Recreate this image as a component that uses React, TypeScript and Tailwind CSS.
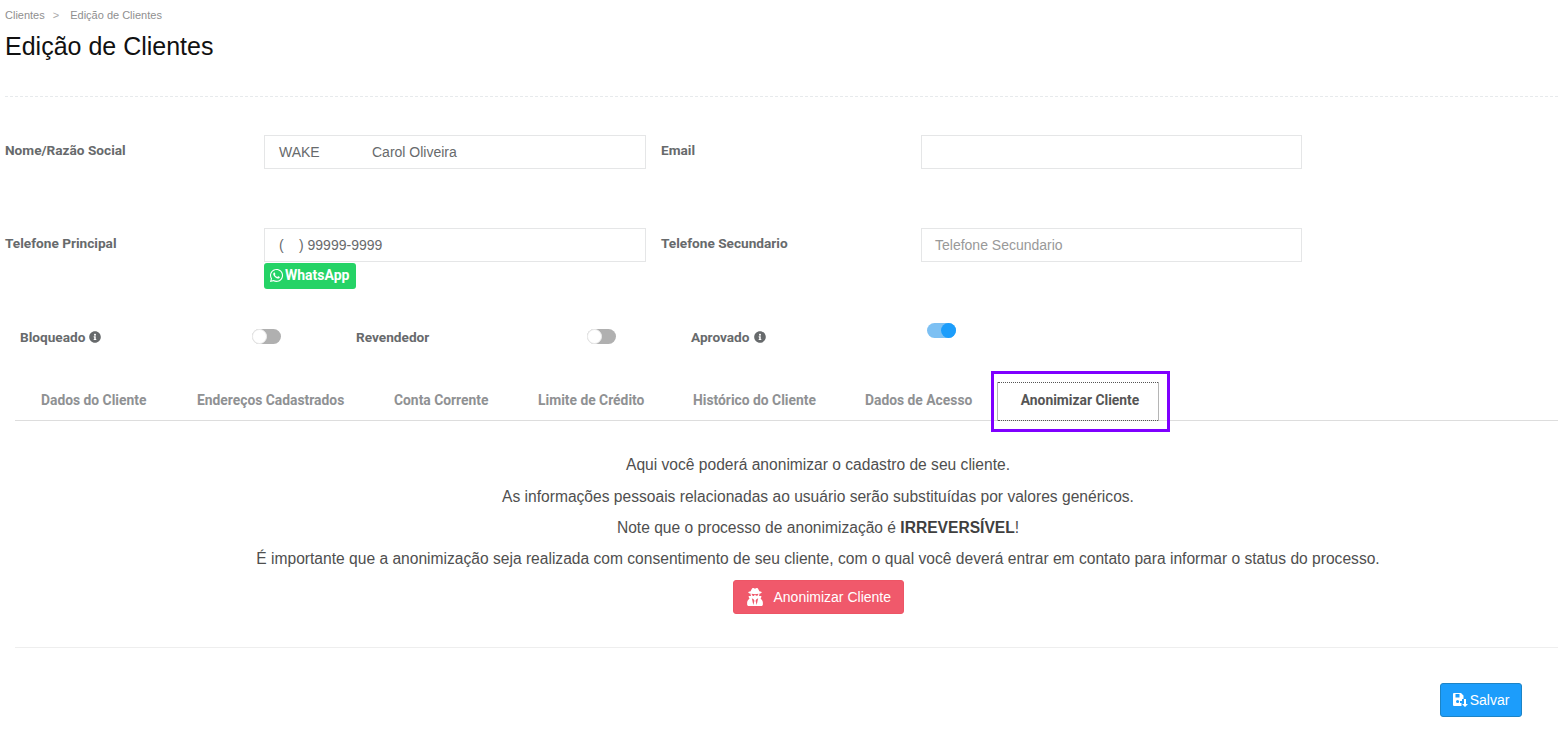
import { FaWhatsapp, FaInfoCircle, FaUserSecret } from "react-icons/fa";

const sans = "font-['Liberation_Sans',Arial,sans-serif]";
const roboto = "font-['Roboto',sans-serif]";

function Label({ children, className = "" }: { children: React.ReactNode; className?: string }) {
  return <div className={`${roboto} text-[13.65px] font-bold leading-[20px] text-[#676a6c] ${className}`}>{children}</div>;
}

function Toggle({ on = false }: { on?: boolean }) {
  return on ? (
    <div className="relative h-[15px] w-[29px] rounded-full bg-[#7cc0f3]">
      <div className="absolute right-0 top-0 h-[15px] w-[15px] rounded-full bg-[#1c9dfb]" />
    </div>
  ) : (
    <div className="relative h-[15px] w-[29px] rounded-full bg-[#b0b0b0]">
      <div className="absolute left-0 top-0 h-[15px] w-[15px] rounded-full border border-[#eeeeee] bg-white" />
    </div>
  );
}

const tabs: [string, string][] = [
  ["Dados do Cliente", "w-[156px]"],
  ["Endereços Cadastrados", "w-[197px]"],
  ["Conta Corrente", "w-[144px]"],
  ["Limite de Crédito", "w-[155px]"],
  ["Histórico do Cliente", "w-[172px]"],
  ["Dados de Acesso", "w-[132px]"],
];

export default function App() {
  return (
    <div className={`${sans} relative h-[747px] w-[1558px] overflow-hidden bg-white pl-[5px]`}>
      {/* Header */}
      <div className="flex h-[30px] items-center pt-px text-[11px] text-[#8f8f8f]">
        <span>Clientes</span>
        <span className="ml-[8px] text-[#a8a8a8]">&gt;</span>
        <span className="ml-[11px]">Edição de Clientes</span>
      </div>
      <h1 className="text-[25px] font-normal leading-[33px] text-[#111111]">Edição de Clientes</h1>
      <div className="mt-[33px] border-t border-dashed border-[#e7eaec]" />

      {/* Form rows */}
      <div className="mt-[38px] flex h-[93px] items-start">
        <Label className="mt-[5px] w-[259px]">Nome/Razão Social</Label>
        <div className="flex h-[34px] w-[382px] items-center border border-[#e5e6e7] pl-[14px] text-[14px] text-[#676a6c]">
          <span className="w-[93px]">WAKE</span>
          <span>Carol Oliveira</span>
        </div>
        <Label className="ml-[15px] mt-[5px] w-[260px]">Email</Label>
        <div className="h-[34px] w-[381px] border border-[#e5e6e7]" />
      </div>

      <div className="flex h-[91px] items-start">
        <Label className="mt-[5px] w-[259px]">Telefone Principal</Label>
        <div className="w-[382px]">
          <div className="flex h-[34px] items-center border border-[#e5e6e7] pl-[14px] text-[14px] text-[#676a6c]">
            <span className="w-[20px]">(</span>
            <span>) 99999-9999</span>
          </div>
          <div className={`${roboto} mt-px flex h-[26px] w-[92px] items-center gap-[1px] rounded-[3px] bg-[#25d366] pl-[5px] text-[14px] font-bold leading-[24px] text-white`}>
            <FaWhatsapp className="-mt-px h-[15px] w-[15px]" />
            <span className="-mt-[2px]">WhatsApp</span>
          </div>
        </div>
        <Label className="ml-[15px] mt-[5px] w-[260px]">Telefone Secundario</Label>
        <div className="flex h-[34px] w-[381px] items-center border border-[#e5e6e7] pl-[13px] text-[14px] text-[#999999]">
          Telefone Secundario
        </div>
      </div>

      {/* Switches */}
      <div className="flex h-[50px] items-start pl-[15px]">
        <Label className="mt-[8px] flex w-[232px] items-center gap-[4px]">
          Bloqueado <FaInfoCircle className="h-[12px] w-[12px]" />
        </Label>
        <div className="mt-[10px] w-[104px]"><Toggle /></div>
        <Label className="mt-[8px] w-[231px]">Revendedor</Label>
        <div className="mt-[10px] w-[104px]"><Toggle /></div>
        <Label className="mt-[8px] flex w-[236px] items-center gap-[4px]">
          Aprovado <FaInfoCircle className="h-[12px] w-[12px]" />
        </Label>
        <div className="mt-[4px]"><Toggle on /></div>
      </div>

      {/* Tabs */}
      <div className={`${roboto} ml-[10px] mt-[13px] flex h-[39px] items-stretch border-b border-[#dddddd] pl-[26px] text-[13.85px] font-bold text-[#8f9193]`}>
        {tabs.map(([t, w]) => (
          <div key={t} className={`${w} pt-[10px] leading-[17px]`}>{t}</div>
        ))}
        <div className="relative ml-0 h-[39px] w-[162px] border-x border-x-[#b5b5b5] text-center leading-[17px] text-[#555555]">
          <div className="absolute left-0 right-0 top-0 border-t border-dotted border-[#555555]" />
          <div className="pl-[4px] pt-[10px]">Anonimizar Cliente</div>
          <div className="absolute bottom-0 left-0 right-0 border-b border-dotted border-[#555555]" />
        </div>
      </div>

      {/* Anonymize panel */}
      <div className="ml-[10px] mt-[29px] h-[198px] w-[1543px] border-b border-[#eeeeee]">
        <div className="ml-[63px] w-[1480px] text-center text-[15.6px] leading-[31px] text-[#4f4f4f]">
          <p className="h-[31px] leading-[29px]">Aqui você poderá anonimizar o cadastro de seu cliente.</p>
          <p>As informações pessoais relacionadas ao usuário serão substituídas por valores genéricos.</p>
          <p>
            Note que o processo de anonimização é <b className="text-[#3f3f3f]">IRREVERSÍVEL</b>!
          </p>
          <p>É importante que a anonimização seja realizada com consentimento de seu cliente, com o qual você deverá entrar em contato para informar o status do processo.</p>
          <div className="mt-[6px] flex justify-center">
            <div className="flex h-[34px] w-[171px] items-center rounded-[3px] border border-[#ed5565] bg-[#f0596b] pl-[12px] text-[14px] leading-none text-white">
              <FaUserSecret className="h-[18px] w-[18px]" />
              <span className="ml-[10px]">Anonimizar Cliente</span>
            </div>
          </div>
        </div>
      </div>

      {/* Save */}
      <div className="mt-[35px] flex justify-end pr-[36px]">
        <div className="flex h-[34px] w-[82px] items-center justify-center gap-[2px] rounded-[3px] border border-[#1c84c6] bg-[#1c9dfb] text-[14px] text-white">
          <svg width="15" height="14" viewBox="0 0 15 14" fill="currentColor">
            <path fillRule="evenodd" d="M0 1a1 1 0 0 1 1-1h7l2.5 2.5V6H9v2H7V10h1.5v3H1a1 1 0 0 1-1-1zM2.5 1V4.5h4V1zM3 8.5a1.6 1.6 0 1 0 3.2 0a1.6 1.6 0 1 0-3.2 0z" />
            <path d="M11 6h2v5h2l-3 3l-3-3h2z" />
          </svg>
          <span>Salvar</span>
        </div>
      </div>

      {/* Annotation highlight */}
      <div className="absolute left-[991px] top-[371px] h-[61px] w-[179px] border-[3px] border-[#7f00ff]" />
    </div>
  );
}
